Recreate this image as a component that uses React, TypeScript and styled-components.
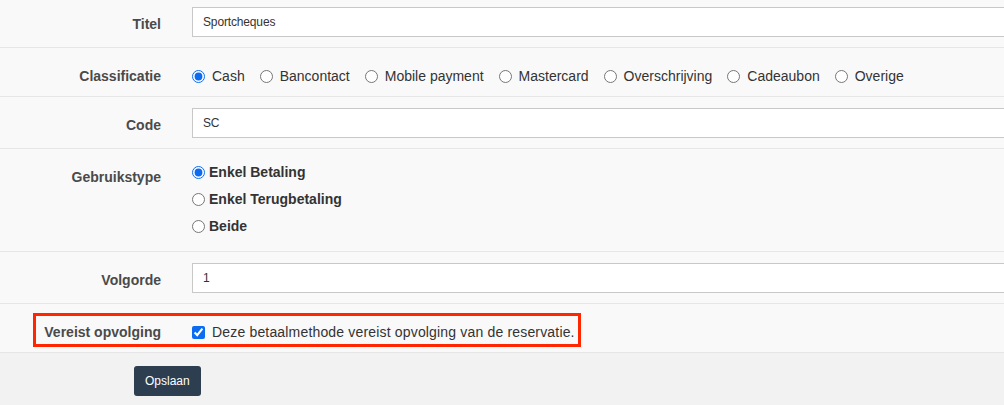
import React from "react";
import styled, { createGlobalStyle } from "styled-components";

const Global = createGlobalStyle`
  html, body { margin: 0; padding: 0; overflow: hidden; background: #f9f9f9; }
  body { font-family: "Liberation Sans", Arial, sans-serif; }
  * { box-sizing: border-box; }
`;

const Page = styled.div`
  width: 1040px;
  margin-top: -4px;
  background: #f9f9f9;
`;

const Row = styled.div`
  position: relative;
  display: grid;
  grid-template-columns: 176px 1fr;
  padding: 11px 0 10px;
  border-bottom: 1px solid #e6e6e6;
`;

const Label = styled.div`
  padding: 7px 15px 0 0;
  line-height: 20px;
  font-size: 14px;
  font-weight: bold;
  color: #4a4a4a;
  text-align: right;
`;

const Field = styled.div`
  padding: 0 0 0 16px;
`;

const TextInput = styled.input`
  display: block;
  width: 100%;
  height: 30px;
  padding: 0 10px;
  border: 1px solid #c8c8c8;
  border-radius: 0;
  background: #fff;
  font-family: "Liberation Sans", Arial, sans-serif;
  font-size: 12px;
  letter-spacing: -0.15px;
  color: #333;
  outline: none;
`;

const InlineGroup = styled.div`
  display: flex;
  gap: 15px;
  padding-top: 7px;
  line-height: 20px;
`;

const InlineOption = styled.label`
  display: flex;
  align-items: center;
  gap: 7px;
  font-size: 14px;
  color: #333;
`;

const StackGroup = styled.div`
  display: flex;
  flex-direction: column;
  gap: 7px;
  padding: 2px 0 5px;
`;

const StackOption = styled.label`
  display: flex;
  align-items: center;
  gap: 4px;
  line-height: 20px;
  font-size: 14px;
  font-weight: bold;
  color: #333;
`;

const Radio = styled.input.attrs({ type: "radio" })`
  width: 13px;
  height: 13px;
  margin: 0;
  accent-color: #0b6cf2;
`;

const CheckLine = styled.label`
  display: flex;
  align-items: center;
  gap: 7px;
  padding-top: 7px;
  line-height: 20px;
  font-size: 14px;
  letter-spacing: 0.17px;
  color: #333;
`;

const Check = styled.input.attrs({ type: "checkbox" })`
  width: 13px;
  height: 13px;
  margin: 0;
  accent-color: #0b6cf2;
`;

const Highlight = styled.div`
  position: absolute;
  left: 33px;
  top: 9px;
  width: 548px;
  height: 34px;
  border: 3.5px solid #ff2600;
  pointer-events: none;
`;

const Footer = styled.div`
  background: #f2f2f2;
  padding: 13px 0 20px 134px;
  height: 60px;
`;

const SaveButton = styled.button`
  height: 30px;
  padding: 0 11px;
  border: none;
  border-radius: 3px;
  background: #2c3e50;
  color: #fff;
  font-family: "Liberation Sans", Arial, sans-serif;
  font-size: 12px;
`;

const classes = ["Cash", "Bancontact", "Mobile payment", "Mastercard", "Overschrijving", "Cadeaubon", "Overige"];
const usage = ["Enkel Betaling", "Enkel Terugbetaling", "Beide"];

export default function App() {
  return (
    <>
      <Global />
      <Page>
        <Row>
          <Label>Titel</Label>
          <Field>
            <TextInput defaultValue="Sportcheques" />
          </Field>
        </Row>
        <Row>
          <Label>Classificatie</Label>
          <Field>
            <InlineGroup>
              {classes.map((c, i) => (
                <InlineOption key={c}>
                  <Radio name="classificatie" defaultChecked={i === 0} />
                  {c}
                </InlineOption>
              ))}
            </InlineGroup>
          </Field>
        </Row>
        <Row>
          <Label>Code</Label>
          <Field>
            <TextInput defaultValue="SC" />
          </Field>
        </Row>
        <Row>
          <Label>Gebruikstype</Label>
          <Field>
            <StackGroup>
              {usage.map((u, i) => (
                <StackOption key={u}>
                  <Radio name="gebruik" defaultChecked={i === 0} />
                  {u}
                </StackOption>
              ))}
            </StackGroup>
          </Field>
        </Row>
        <Row>
          <Label>Volgorde</Label>
          <Field>
            <TextInput defaultValue="1" />
          </Field>
        </Row>
        <Row>
          <Label>Vereist opvolging</Label>
          <Field>
            <CheckLine>
              <Check defaultChecked />
              Deze betaalmethode vereist opvolging van de reservatie.
            </CheckLine>
          </Field>
          <Highlight />
        </Row>
        <Footer>
          <SaveButton>Opslaan</SaveButton>
        </Footer>
      </Page>
    </>
  );
}
